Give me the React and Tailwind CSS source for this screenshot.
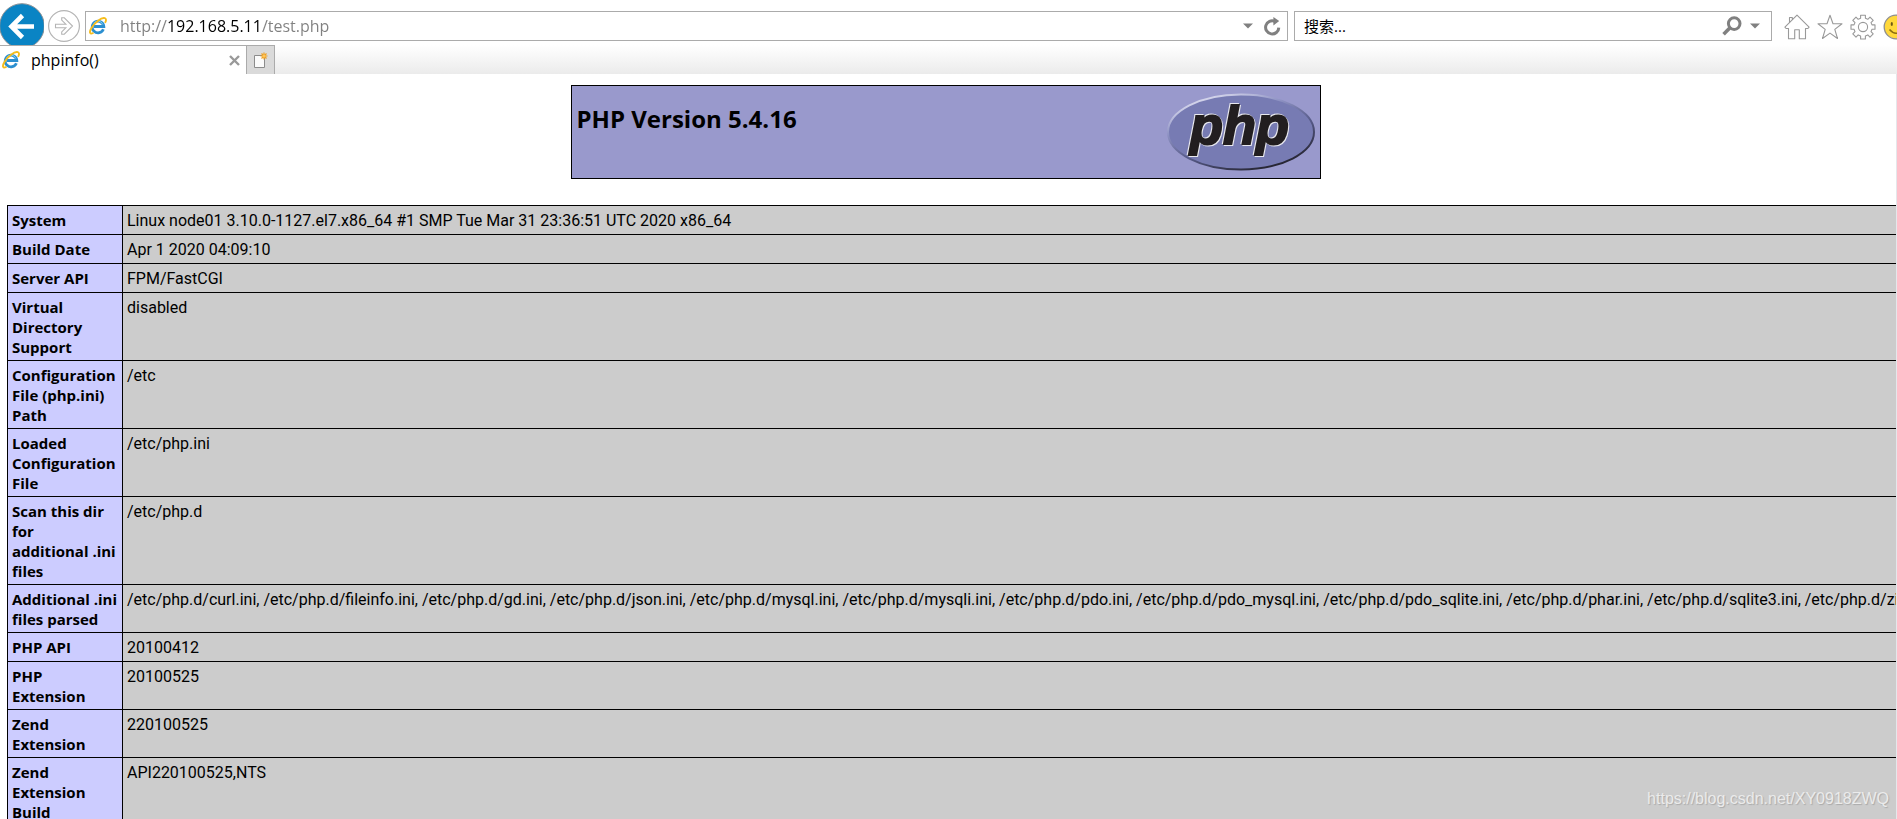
import { useId, useState } from 'react';

const INFO = [
  ['System', 'Linux node01 3.10.0-1127.el7.x86_64 #1 SMP Tue Mar 31 23:36:51 UTC 2020 x86_64'],
  ['Build Date', 'Apr 1 2020 04:09:10'],
  ['Server API', 'FPM/FastCGI'],
  ['Virtual Directory Support', 'disabled'],
  ['Configuration File (php.ini) Path', '/etc'],
  ['Loaded Configuration File', '/etc/php.ini'],
  ['Scan this dir for\nadditional .ini\nfiles', '/etc/php.d'],
  [
    'Additional .ini files parsed',
    '/etc/php.d/curl.ini, /etc/php.d/fileinfo.ini, /etc/php.d/gd.ini, /etc/php.d/json.ini, /etc/php.d/mysql.ini, /etc/php.d/mysqli.ini, /etc/php.d/pdo.ini, /etc/php.d/pdo_mysql.ini, /etc/php.d/pdo_sqlite.ini, /etc/php.d/phar.ini, /etc/php.d/sqlite3.ini, /etc/php.d/zip.ini',
  ],
  ['PHP API', '20100412'],
  ['PHP Extension', '20100525'],
  ['Zend Extension', '220100525'],
  ['Zend Extension Build', 'API220100525,NTS'],
];

export default function App() {
  return (
    <div className="relative flex flex-col h-screen overflow-hidden bg-white text-black font-['Open_Sans','Noto_Sans_CJK_SC',sans-serif]">
      <NavBar />
      <TabStrip />
      <main className="flex-1 min-h-0 overflow-hidden border-r border-gray-200 pt-[11px] pl-[7px]">
        <VersionBanner />
        <InfoTable />
      </main>
      <a
        href="https://blog.csdn.net/XY0918ZWQ"
        className="absolute right-2 bottom-2 text-base leading-6 text-[#ebebeb] [text-shadow:1px_1px_1px_#aaa] font-['Liberation_Sans',sans-serif]"
      >
        https://blog.csdn.net/XY0918ZWQ
      </a>
    </div>
  );
}

function NavBar() {
  const [url, setUrl] = useState('http://192.168.5.11/test.php');
  const [query, setQuery] = useState('');

  return (
    <header className="flex h-[45px] shrink-0 overflow-hidden pt-[3px]">
      <button type="button" aria-label="Back" className="h-[46px] w-11 shrink-0">
        <svg viewBox="0 0 44 46" className="h-[46px] w-11">
          <circle cx="22" cy="23" r="22.3" fill="#0a84c4" stroke="#8a8f94" strokeWidth="1" />
          <path d="M34 23.5H13M22.5 12.5 11.5 23.5l11 11" fill="none" stroke="#fff" strokeWidth="4.6" />
        </svg>
      </button>
      <button type="button" aria-label="Forward" className="ml-1 mt-[7px] h-8 w-8 shrink-0">
        <svg viewBox="0 0 32 32" className="h-8 w-8" fill="none" stroke="#b4b4b4">
          <circle cx="16" cy="16" r="15.4" strokeWidth="1.2" />
          <path d="M7.5 14.2h10.3l-4.1-4.1V7.8h2.6l8.2 8.2-8.2 8.2h-2.6v-2.3l4.1-4.1H7.5z" strokeWidth="1.1" />
        </svg>
      </button>

      <div className="ml-[5px] mt-2 flex h-[30px] flex-1 items-center border border-[#ababab] pl-[3px] pr-[6px]">
        <IeIcon />
        <input
          type="text"
          aria-label="Address"
          value={url}
          onChange={(e) => setUrl(e.target.value)}
          className="ml-[13px] flex-1 bg-clip-text text-base text-transparent caret-black outline-none bg-[linear-gradient(90deg,#808080_48px,#000_48px,#000_141px,#808080_141px)] font-['Open_Sans',sans-serif]"
        />
        <button type="button" aria-label="Show address list" className="mr-[11px]">
          <Caret />
        </button>
        <button type="button" aria-label="Refresh">
          <svg viewBox="0 0 17 19" className="h-[19px] w-[17px]">
            <path d="M11 4.4A6.6 6.6 0 1 0 14.8 10.6" fill="none" stroke="#808080" strokeWidth="3" />
            <path d="M9.4 0v8.6L15.2 4z" fill="#808080" />
          </svg>
        </button>
      </div>

      <div className="ml-[6px] mt-2 flex h-[30px] w-[478px] shrink-0 items-center border border-[#ababab] pl-[9px] pr-[11px]">
        <input
          type="search"
          aria-label="搜索"
          placeholder="搜索..."
          value={query}
          onChange={(e) => setQuery(e.target.value)}
          className="min-w-0 flex-1 text-[15px] outline-none placeholder:text-black"
        />
        <button type="button" aria-label="Search" className="mr-2">
          <svg viewBox="0 0 20 20" className="h-5 w-5" fill="none" stroke="#808080">
            <circle cx="12.2" cy="7.6" r="5.8" strokeWidth="3" />
            <path d="M8 11.8 1.6 18.2" strokeWidth="3.6" />
          </svg>
        </button>
        <button type="button" aria-label="Search options">
          <Caret />
        </button>
      </div>

      <div className="ml-3 mt-[11px] flex w-[113px] shrink-0 gap-[7px] overflow-hidden">
        <button type="button" aria-label="Home" className="h-[26px] w-[26px] shrink-0">
          <svg viewBox="0 0 26 26" className="h-[26px] w-[26px]" fill="none" stroke="#999" strokeWidth="1.1">
            <path d="M13 1.2 .9 13.2l1.2 1.3h2.4v10.2h6.2v-9h4.6v9h6.2V14.5h2.4l1.2-1.3zM5.5 8.5V3.5h2.8v2.3" strokeLinejoin="round" />
          </svg>
        </button>
        <button type="button" aria-label="Favorites" className="h-[26px] w-[26px] shrink-0">
          <svg viewBox="0 0 26 26" className="h-[26px] w-[26px]" fill="none" stroke="#999" strokeWidth="1.1">
            <path d="M13 1.2 16 9.8h9l-7.2 5.6 2.7 9.1L13 19.1l-7.5 5.4 2.7-9.1L1 9.8h9z" strokeLinejoin="round" />
          </svg>
        </button>
        <button type="button" aria-label="Tools" className="h-[26px] w-[26px] shrink-0">
          <GearIcon />
        </button>
        <button type="button" aria-label="Feedback" className="h-[26px] w-[26px] shrink-0">
          <svg viewBox="0 0 26 26" className="h-[26px] w-[26px]">
            <circle cx="13" cy="13" r="11.8" fill="#ffd83b" stroke="#8f8f8f" strokeWidth="1.3" />
            <ellipse cx="8.8" cy="10" rx="1.1" ry="1.9" fill="#6d5a16" />
            <ellipse cx="17.2" cy="10" rx="1.1" ry="1.9" fill="#6d5a16" />
            <path d="M6.5 15.5q6.5 7.5 13 0" fill="none" stroke="#8a6d10" strokeWidth="1.6" />
          </svg>
        </button>
      </div>
    </header>
  );
}

function TabStrip() {
  return (
    <nav className="flex h-[29px] shrink-0 bg-linear-to-b from-white to-[#ebebeb]">
      <div className="flex w-[246px] items-center border-t border-[#ababab] bg-white pl-[2px] pr-[6px]">
        <IeIcon />
        <span className="ml-[11px] flex-1 text-base">phpinfo()</span>
        <button type="button" aria-label="Close tab">
          <svg viewBox="0 0 11 11" className="h-[11px] w-[11px]">
            <path d="M1 1l9 9M10 1l-9 9" stroke="#999" strokeWidth="2.4" />
          </svg>
        </button>
      </div>
      <button
        type="button"
        aria-label="New tab"
        className="flex w-[29px] items-center justify-center border-x border-t border-[#ababab] bg-[#dadada]"
      >
        <svg viewBox="0 0 16 17" className="h-[17px] w-4">
          <path d="M1.5 3.5h10v12h-10z" fill="#fbfbfb" stroke="#8c8c8c" />
          <path d="M11 .5v7M7.5 4h7M8.5 1.5l5 5M13.5 1.5l-5 5" stroke="#f0a020" strokeWidth="1.2" />
          <circle cx="11" cy="4" r="1.6" fill="#ffc558" />
        </svg>
      </button>
    </nav>
  );
}

function VersionBanner() {
  return (
    <div className="pr-3">
      <div className="mx-auto flex h-[94px] w-[750px] justify-between border border-black bg-[#9999cc] px-[5px] pt-[7px]">
        <h1 className="pt-2 text-2xl leading-9 font-bold">PHP Version 5.4.16</h1>
        <a href="http://www.php.net/" aria-label="PHP" className="h-[78px]">
          <PhpLogo />
        </a>
      </div>
    </div>
  );
}

function InfoTable() {
  return (
    <table className="mt-[26px] w-max border-collapse text-left align-top leading-5">
      <tbody>
        {INFO.map(([name, value]) => (
          <tr key={name} className="h-[29px] align-top">
            <th
              scope="row"
              className="w-[115px] border border-black bg-[#ccccff] pt-1 pr-[3px] pb-[3px] pl-1 text-[15px] font-bold whitespace-pre-line"
            >
              {name}
            </th>
            <td className="border border-black bg-[#cccccc] px-1 pt-[5px] pb-[2px] whitespace-nowrap font-[Roboto,sans-serif]">
              {value}
            </td>
          </tr>
        ))}
      </tbody>
    </table>
  );
}

function Caret() {
  return (
    <svg viewBox="0 0 10 6" className="h-[6px] w-[10px]">
      <path d="M0 .5h10L5 5.5z" fill="#808080" />
    </svg>
  );
}

function GearIcon() {
  return (
    <svg viewBox="0 0 26 26" className="h-[26px] w-[26px]" fill="none" stroke="#999" strokeWidth="1.1">
      <circle cx="13" cy="13" r="4.6" />
      <path
        d="M10.6 1.2h4.8v3.1l2.4 1 2.2-2.2 3.2 3.2-2.2 2.3 1 2.3h3v4.4h-3l-1 2.3 2.2 2.3-3.2 3.2-2.2-2.2-2.4 1v3.1h-4.8v-3.1l-2.4-1L6 23.1l-3.2-3.2L5 17.6l-1-2.3H1v-4.4h3l1-2.3-2.2-2.3L6 3.1l2.2 2.2 2.4-1z"
        strokeLinejoin="round"
      />
    </svg>
  );
}

function IeIcon() {
  return (
    <svg viewBox="0 0 18 18" className="h-[18px] w-[18px] shrink-0" fill="none">
      <path d="M14.4 12.2a5.8 5.8 0 1 1 .4-2.7H5" stroke="#2b8fd0" strokeWidth="2.8" />
      <path d="M13.9 7.6a5 5 0 0 0-9.4-.4" stroke="#7fd0f5" strokeWidth="1" />
      <path
        d="M3.8 16.2C.6 17.6 0 15 2.6 10.8 5.6 5.6 12.4 .2 15.8 1.2c1.6.5 1.4 2.4.6 4"
        stroke="#f6bd1b"
        strokeWidth="1.9"
        strokeLinecap="round"
      />
    </svg>
  );
}

function PhpLogo() {
  const rim = useId();
  return (
    <svg viewBox="0 0 148 78" className="h-[78px] w-[148px]">
      <defs>
        <linearGradient id={rim} x1="0.2" y1="0" x2="0.8" y2="1">
          <stop offset="0" stopColor="#e6e6f5" />
          <stop offset="0.3" stopColor="#8f93c4" />
          <stop offset="0.6" stopColor="#565a88" />
          <stop offset="1" stopColor="#1d1b22" />
        </linearGradient>
      </defs>
      <ellipse cx="74" cy="39" rx="73" ry="37.5" fill="#777bb3" stroke={`url(#${rim})`} strokeWidth="2" />
      <text
        x="23"
        y="51"
        fontSize="54"
        fontWeight="700"
        fontStyle="italic"
        fill="#221e20"
        stroke="#221e20"
        strokeWidth="2"
        className="font-['Liberation_Sans',sans-serif] [filter:drop-shadow(1px_1px_0_#e8e8ee)_drop-shadow(-1px_-1px_0_#e8e8ee)]"
      >
        php
      </text>
    </svg>
  );
}
